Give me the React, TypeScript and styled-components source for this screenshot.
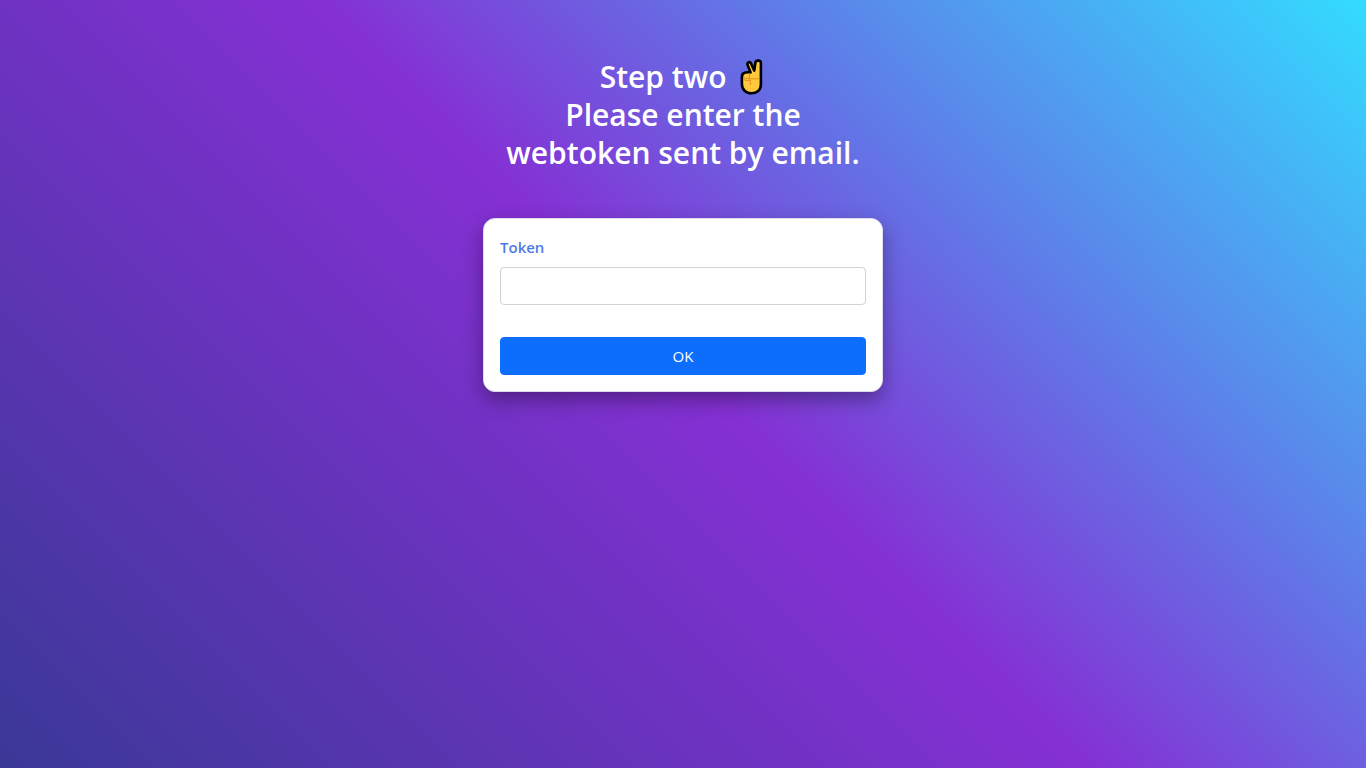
import React, { useState } from "react";
import styled, { createGlobalStyle } from "styled-components";

const GlobalStyle = createGlobalStyle`
  *, *::before, *::after {
    box-sizing: border-box;
  }
  body {
    margin: 0;
    font-family: "Segoe UI", "Open Sans", "Noto Sans", sans-serif;
    font-size: 16px;
    line-height: 24px;
  }
`;

const Page = styled.main`
  display: flex;
  flex-direction: column;
  align-items: center;
  gap: 46px;
  min-height: 100vh;
  padding: 58px 16px;
  background: linear-gradient(
    45deg,
    #3a3897 0%,
    #8530d4 51%,
    #5f7ce8 72%,
    #33dcff 100%
  );
`;

const Title = styled.h1`
  margin: 0;
  color: #fff;
  font-size: 30px;
  font-weight: 600;
  line-height: 38px;
  text-align: center;
`;

const HandIcon = styled.svg`
  width: 24px;
  height: 38px;
  margin: 0 2px 0 6px;
  vertical-align: top;
`;

const Card = styled.form`
  display: flex;
  flex-direction: column;
  width: 100%;
  max-width: 400px;
  padding: 16px;
  background: #fff;
  border: 1px solid #dfdcee;
  border-radius: 12px;
  box-shadow: 0 8px 20px rgba(0, 0, 0, 0.35);
`;

const Label = styled.label`
  margin-bottom: 8px;
  color: #4f7be8;
  font-size: 15px;
  font-weight: 600;
`;

const Input = styled.input`
  width: 100%;
  height: 38px;
  margin-bottom: 32px;
  padding: 6px 12px;
  color: #212529;
  font: inherit;
  background: #fff;
  border: 1px solid #ced4da;
  border-radius: 4px;
`;

const Button = styled.button`
  height: 38px;
  padding: 6px 12px;
  color: #fff;
  font-family: inherit;
  font-size: 15px;
  line-height: 24px;
  background: #0d6efd;
  border: 1px solid #0d6efd;
  border-radius: 4px;
  cursor: pointer;
`;

function VictoryHand() {
  return (
    <HandIcon viewBox="0 0 24 38" role="img" aria-label="Victory hand">
      <g fill="none" strokeLinecap="round" strokeLinejoin="round">
        <path
          d="M10.6 14.5 L7.6 7 C6.6 4.4 9.9 3 11 5.4 L14.3 12.6 L15.4 4.6 C15.9 1.8 20.9 2 20.9 5 L20.9 26.5 C20.9 32 16.8 35.3 11.6 35.3 C5.8 35.3 1.9 31.6 1.9 26 L1.9 19 C1.9 16.2 3.6 14.8 5.4 14.5 C7 14.2 8.8 14 10.6 14.5 Z"
          fill="#ffc83d"
          stroke="#000"
          strokeWidth="2.6"
        />
        <path
          d="M3.6 19.4 C3.2 21.4 4.4 22.4 6.4 22.4 H10.4 V26.6 M4 19.6 C6 20.8 9 21 12 20.8 H19 M9.4 15.6 V20.4"
          stroke="#e08f1f"
          strokeWidth="1"
        />
      </g>
    </HandIcon>
  );
}

export default function App() {
  const [token, setToken] = useState("");
  return (
    <>
      <GlobalStyle />
      <Page>
        <Title>
          Step two <VictoryHand />
          <br />
          Please enter the
          <br />
          webtoken sent by email.
        </Title>
        <Card onSubmit={(event) => event.preventDefault()}>
          <Label htmlFor="token">Token</Label>
          <Input
            id="token"
            type="text"
            value={token}
            onChange={(event) => setToken(event.target.value)}
          />
          <Button type="submit">OK</Button>
        </Card>
      </Page>
    </>
  );
}
